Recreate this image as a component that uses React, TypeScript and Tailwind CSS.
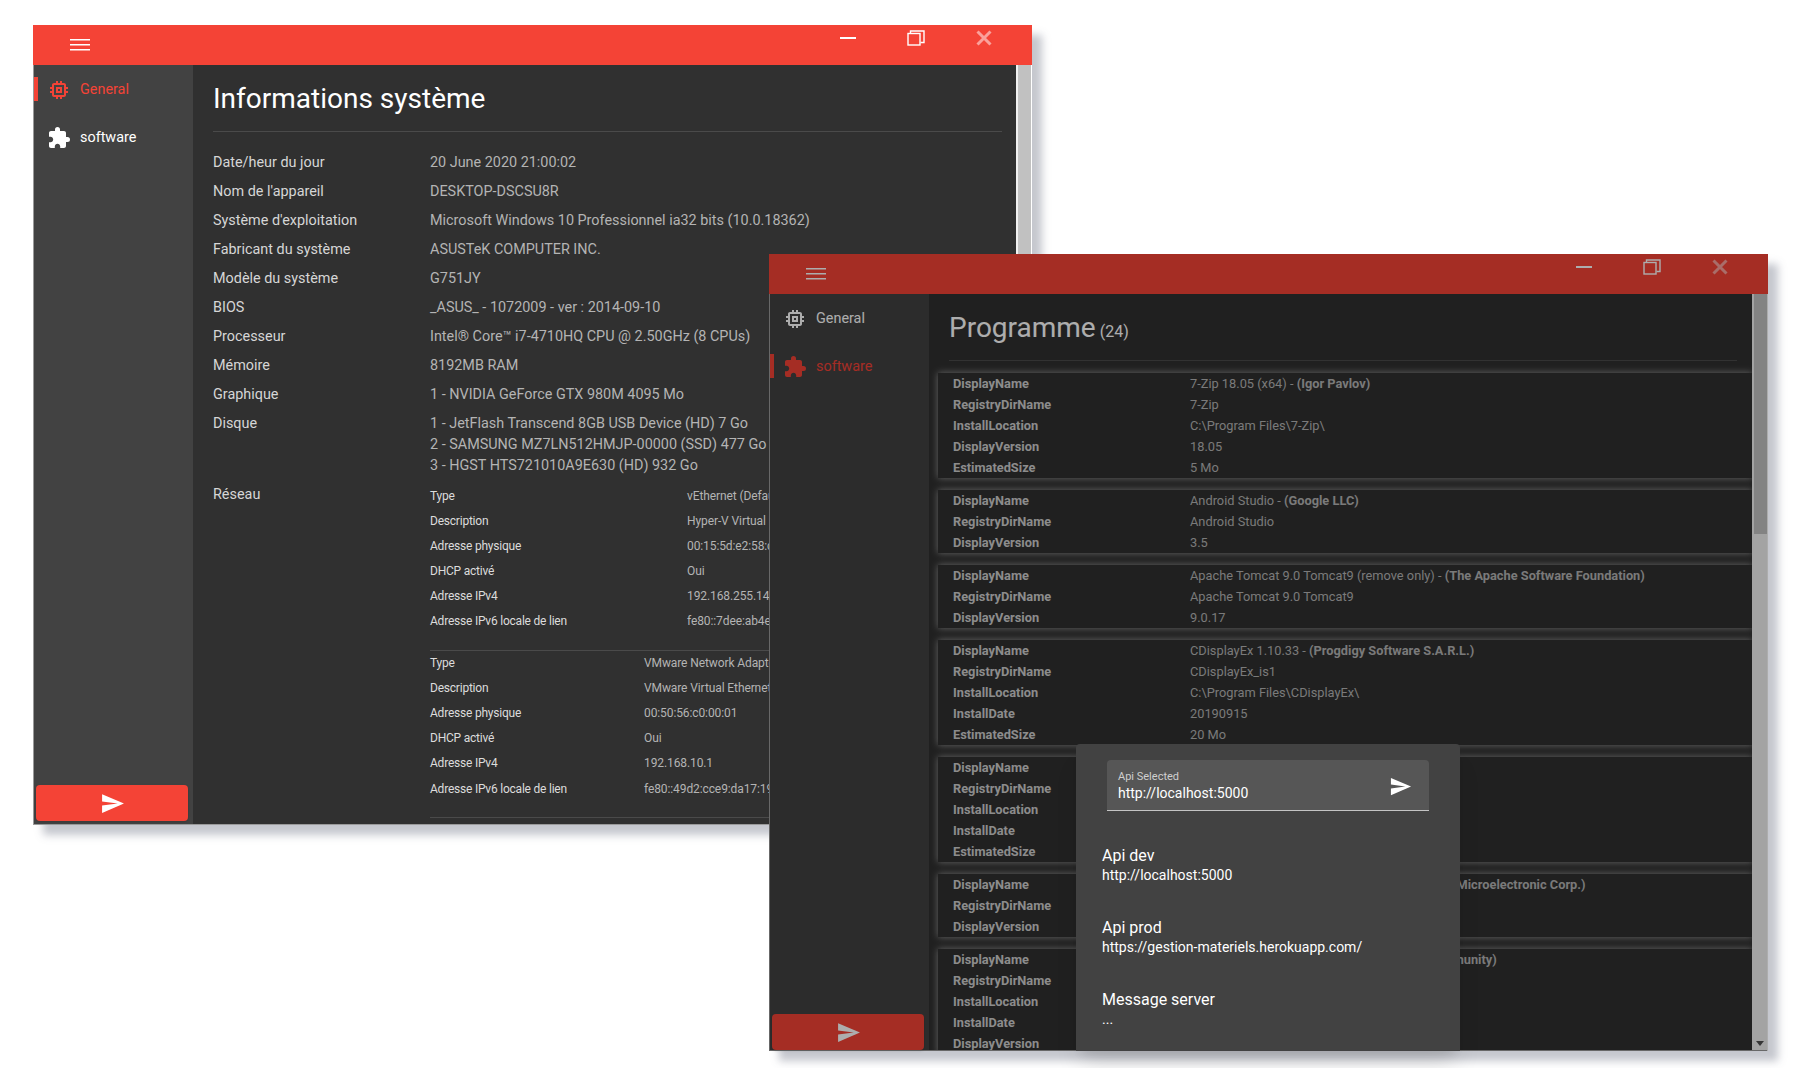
import React from 'react';
import { MdExtension, MdMemory, MdSend } from 'react-icons/md';

interface WindowProps {
  active: number;
  className: string;
  buttonClass: string;
  dimmed?: boolean;
  children: React.ReactNode;
  drawer?: React.ReactNode;
}

const systemRows: [string, string[]][] = [
  ['Date/heur du jour', ['20 June 2020 21:00:02']],
  ['Nom de l\'appareil', ['DESKTOP-DSCSU8R']],
  ['Système d\'exploitation', ['Microsoft Windows 10 Professionnel ia32 bits (10.0.18362)']],
  ['Fabricant du système', ['ASUSTeK COMPUTER INC.']],
  ['Modèle du système', ['G751JY']],
  ['BIOS', ['_ASUS_ - 1072009 - ver : 2014-09-10']],
  ['Processeur', ['Intel® Core™ i7-4710HQ CPU @ 2.50GHz (8 CPUs)']],
  ['Mémoire', ['8192MB RAM']],
  ['Graphique', ['1 - NVIDIA GeForce GTX 980M 4095 Mo']],
  [
    'Disque',
    [
      '1 - JetFlash Transcend 8GB USB Device (HD) 7 Go',
      '2 - SAMSUNG MZ7LN512HMJP-00000 (SSD) 477 Go',
      '3 - HGST HTS721010A9E630 (HD) 932 Go',
    ],
  ],
];

const networks = [
  {
    labelClass: 'w-[257px] shrink-0',
    rows: [
      ['Type', 'vEthernet (Default Switch)'],
      ['Description', 'Hyper-V Virtual Ethernet Adapter'],
      ['Adresse physique', '00:15:5d:e2:58:c4'],
      ['DHCP activé', 'Oui'],
      ['Adresse IPv4', '192.168.255.145'],
      ['Adresse IPv6 locale de lien', 'fe80::7dee:ab4e:5c1'],
    ],
  },
  {
    labelClass: 'w-[214px] shrink-0',
    rows: [
      ['Type', 'VMware Network Adapter'],
      ['Description', 'VMware Virtual Ethernet'],
      ['Adresse physique', '00:50:56:c0:00:01'],
      ['DHCP activé', 'Oui'],
      ['Adresse IPv4', '192.168.10.1'],
      ['Adresse IPv6 locale de lien', 'fe80::49d2:cce9:da17:19'],
    ],
  },
];

const programs: { name?: string; vendor?: string; rows: [string, string][] }[] = [
  {
    name: '7-Zip 18.05 (x64)',
    vendor: 'Igor Pavlov',
    rows: [
      ['RegistryDirName', '7-Zip'],
      ['InstallLocation', 'C:\\Program Files\\7-Zip\\'],
      ['DisplayVersion', '18.05'],
      ['EstimatedSize', '5 Mo'],
    ],
  },
  {
    name: 'Android Studio',
    vendor: 'Google LLC',
    rows: [
      ['RegistryDirName', 'Android Studio'],
      ['DisplayVersion', '3.5'],
    ],
  },
  {
    name: 'Apache Tomcat 9.0 Tomcat9 (remove only)',
    vendor: 'The Apache Software Foundation',
    rows: [
      ['RegistryDirName', 'Apache Tomcat 9.0 Tomcat9'],
      ['DisplayVersion', '9.0.17'],
    ],
  },
  {
    name: 'CDisplayEx 1.10.33',
    vendor: 'Progdigy Software S.A.R.L.',
    rows: [
      ['RegistryDirName', 'CDisplayEx_is1'],
      ['InstallLocation', 'C:\\Program Files\\CDisplayEx\\'],
      ['InstallDate', '20190915'],
      ['EstimatedSize', '20 Mo'],
    ],
  },
  {
    rows: [
      ['RegistryDirName', ''],
      ['InstallLocation', ''],
      ['InstallDate', ''],
      ['EstimatedSize', ''],
    ],
  },
  {
    name: 'Pilote USB 2.0 Card Reader 1.12.4 64',
    vendor: 'Silicon Microelectronic Corp.',
    rows: [
      ['RegistryDirName', ''],
      ['DisplayVersion', ''],
    ],
  },
  {
    name: 'Notepad++ 7.8.1 v2 (64-bit)',
    vendor: 'Notepad++ Community',
    rows: [
      ['RegistryDirName', ''],
      ['InstallLocation', ''],
      ['InstallDate', ''],
      ['DisplayVersion', ''],
    ],
  },
];

const NavItem: React.FC<{ label: string; icon: React.ReactNode; active: boolean }> = ({ label, icon, active }) => (
  <div className={`relative flex h-12 items-center pl-[13px] text-[14.4px] ${active ? 'text-[#f44336]' : 'text-white'}`}>
    {active && <div className="absolute left-0 top-[11px] h-6 w-1 bg-[#f44336]" />}
    {icon}
    <span className="ml-[9px]">{label}</span>
  </div>
);

const TitleBar: React.FC = () => (
  <div className="flex h-10 shrink-0 items-start justify-between bg-[#f44336] pr-[14px]">
    <svg className="ml-[37px] mt-[13px]" width="20" height="14" viewBox="0 0 20 14" fill="white">
      <rect y="1" width="20" height="1.5" />
      <rect y="6" width="20" height="1.5" />
      <rect y="11" width="20" height="1.5" />
    </svg>
    <div className="flex pt-[3px]">
      <div className="flex h-5 w-[68px] items-center justify-center">
        <div className="h-[2px] w-4 bg-white" />
      </div>
      <div className="flex h-5 w-[68px] items-center justify-center">
        <svg width="18" height="16" viewBox="0 0 18 16" fill="none" stroke="white" strokeWidth="1.4">
          <rect x="1" y="3.5" width="12" height="11.5" />
          <path d="M3.5 3V1h13.5v11.5h-3.5" />
        </svg>
      </div>
      <div className="flex h-5 w-[68px] items-center justify-center">
        <svg width="16" height="16" viewBox="0 0 16 16" fill="none" stroke="white" strokeOpacity="0.5" strokeWidth="3">
          <path d="M1.5 1.5l13 13M14.5 1.5l-13 13" />
        </svg>
      </div>
    </div>
  </div>
);

const AppWindow: React.FC<WindowProps> = ({ active, className, buttonClass, dimmed, children, drawer }) => (
  <div className={`absolute flex w-[999px] flex-col shadow-[10px_10px_8px_rgba(90,95,115,0.35)] ${className}`}>
    <TitleBar />
    <div className="mr-[1.5px] flex min-h-0 flex-1 border-b border-l border-[#9a9a9a]">
      <div className="flex w-[159px] shrink-0 flex-col justify-between bg-[#424242] pt-px">
        <div>
          <NavItem label="General" active={active === 0} icon={<MdMemory size={24} />} />
          <NavItem label="software" active={active === 1} icon={<MdExtension size={24} />} />
        </div>
        <div className={`ml-[2px] mr-[5px] flex h-9 items-center justify-center rounded bg-[#f44336] text-white shadow-sm ${buttonClass}`}>
          <MdSend size={25} />
        </div>
      </div>
      <div className="min-w-0 flex-1 overflow-hidden bg-[#303030]">{children}</div>
      <div className="flex w-[15px] shrink-0 flex-col justify-between bg-[#f1f1f1] pl-[2px]">
        <div className="h-[240px] bg-[#c1c1c1]" />
        <div className="mx-auto mb-[4px] h-0 w-0 border-x-[4px] border-t-[5px] border-x-transparent border-t-[#505050]" />
      </div>
    </div>
    {dimmed && <div className="absolute inset-0 bg-black/32" />}
    {drawer}
  </div>
);

const SystemPage: React.FC = () => (
  <div className="pl-5 pr-[14px]">
    <div className="border-b border-[#4a4a4a] pb-[14px] pt-[16px] text-[28px] leading-9 text-white">
      Informations système
    </div>
    <div className="mt-[16px] text-[14.4px]">
      {systemRows.map(([label, values]) => (
        <div key={label} className="flex py-1 leading-[21px]">
          <div className="w-[217px] shrink-0 text-[#d6d6d6]">{label}</div>
          <div className="whitespace-nowrap text-[#b4b4b4]">
            {values.map((value) => (
              <div key={value}>{value}</div>
            ))}
          </div>
        </div>
      ))}
      <div className="flex">
        <div className="w-[217px] shrink-0 py-1 leading-[21px] text-[#d6d6d6]">Réseau</div>
        <div className="min-w-0 flex-1 pt-[3px]">
          {networks.map((network, index) => (
            <div key={index} className="border-b border-[#4a4a4a] pb-[16px]">
              {network.rows.map(([label, value]) => (
                <div key={label} className="flex h-[25.1px] items-center whitespace-nowrap text-xs">
                  <div className={`${network.labelClass} tracking-[-0.22px] text-[#dcdcdc]`}>{label}</div>
                  <div className="tracking-[-0.1px] text-[#b4b4b4]">{value}</div>
                </div>
              ))}
            </div>
          ))}
        </div>
      </div>
    </div>
  </div>
);

const ProgramRow: React.FC<{ label: string; children: React.ReactNode }> = ({ label, children }) => (
  <div className="flex h-[21px] items-center whitespace-nowrap text-[12.8px]">
    <div className="w-[237px] shrink-0 font-bold text-[#cfcfcf]">{label}</div>
    <div className="text-[#b4b4b4]">{children}</div>
  </div>
);

const ProgramPage: React.FC = () => (
  <div>
    <div className="ml-5 mr-[15px] flex items-baseline border-b border-[#4a4a4a] pb-[15px] pt-[16px] text-[28px] leading-[35px] text-white">
      Programme
      <span className="ml-1 text-base">(24)</span>
    </div>
    <div className="ml-[9px] mt-[12px]">
      {programs.map((program, index) => (
        <div key={index} className="mb-3 bg-[#303030] pl-[15px] shadow-[0_0_7px_rgba(255,255,255,0.5)]">
          <ProgramRow label="DisplayName">
            {program.name && (
              <>
                {program.name} - <span className="font-bold">({program.vendor})</span>
              </>
            )}
          </ProgramRow>
          {program.rows.map(([label, value]) => (
            <ProgramRow key={label} label={label}>
              {value}
            </ProgramRow>
          ))}
        </div>
      ))}
    </div>
  </div>
);

const ApiOption: React.FC<{ title: string; value: string }> = ({ title, value }) => (
  <div className="h-[72px]">
    <div className="text-base leading-[22px] text-white">{title}</div>
    <div className="text-sm leading-4 text-white">{value}</div>
  </div>
);

const ApiDrawer: React.FC = () => (
  <div className="absolute bottom-0 left-[307px] top-[490px] w-[384px] overflow-hidden rounded-t bg-[#424242] px-[26px] pt-4 shadow-xl">
    <div className="mx-[5px] flex h-[51px] items-center justify-between rounded-t border-b border-[#c4c4c4] bg-[#565656] pl-[11px] pr-[17px]">
      <div className="pt-[2px]">
        <div className="text-[11px] leading-[13px] text-[#cfcfcf]">Api Selected</div>
        <div className="text-sm leading-[20px] text-white">http://localhost:5000</div>
      </div>
      <MdSend size={23} className="mt-[3px] text-white" />
    </div>
    <div className="mt-[34px]">
      <ApiOption title="Api dev" value="http://localhost:5000" />
      <ApiOption title="Api prod" value="https://gestion-materiels.herokuapp.com/" />
      <ApiOption title="Message server" value="..." />
    </div>
  </div>
);

const App: React.FC = () => (
  <div className="relative h-screen w-full overflow-hidden bg-white font-['Roboto',sans-serif]">
    <AppWindow active={0} buttonClass="mb-[3px]" className="left-[33px] top-[25px] h-[800px]">
      <SystemPage />
    </AppWindow>
    <AppWindow active={1} buttonClass="mb-0" dimmed className="left-[769px] top-[254px] h-[797px]" drawer={<ApiDrawer />}>
      <ProgramPage />
    </AppWindow>
  </div>
);

export default App;
